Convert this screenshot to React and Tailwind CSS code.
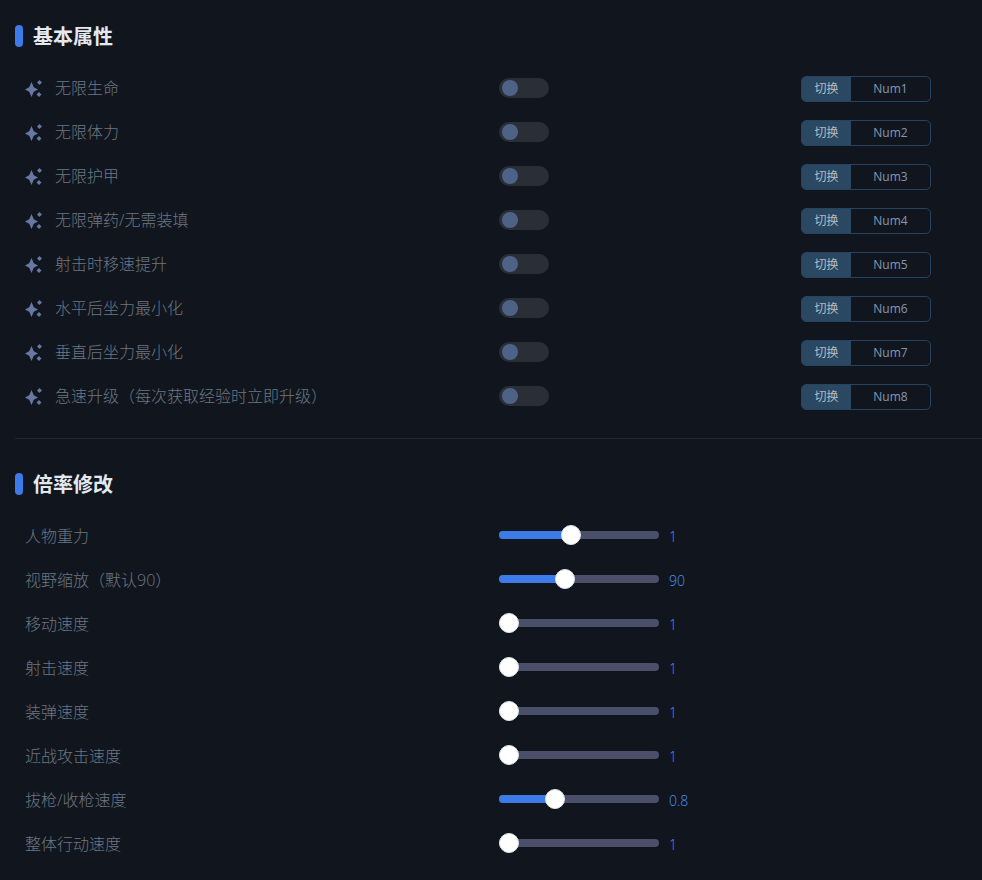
const font = { fontFamily: '"Open Sans", "Noto Sans CJK SC", sans-serif' };

const toggles = [
  ["无限生命", "Num1"],
  ["无限体力", "Num2"],
  ["无限护甲", "Num3"],
  ["无限弹药/无需装填", "Num4"],
  ["射击时移速提升", "Num5"],
  ["水平后坐力最小化", "Num6"],
  ["垂直后坐力最小化", "Num7"],
  ["急速升级（每次获取经验时立即升级）", "Num8"],
];

const sliders = [
  ["人物重力", "1", 72],
  ["视野缩放（默认90）", "90", 66],
  ["移动速度", "1", 10],
  ["射击速度", "1", 10],
  ["装弹速度", "1", 10],
  ["近战攻击速度", "1", 10],
  ["拔枪/收枪速度", "0.8", 56],
  ["整体行动速度", "1", 10],
];

function Spark() {
  return (
    <svg width="18" height="18" viewBox="0 0 18 18" className="shrink-0 mt-[2px]" fill="#6878a4">
      <path d="M6.5 2 L8.8 7.2 L13 9.5 L8.8 11.8 L6.5 17 L4.2 11.8 L0 9.5 L4.2 7.2 Z" />
      <path d="M14.5 0 L15.7 1.3 L17 2.5 L15.7 3.7 L14.5 5 L13.3 3.7 L12 2.5 L13.3 1.3 Z" />
      <path d="M14 12 L15.2 13.3 L16.5 14.5 L15.2 15.7 L14 17 L12.8 15.7 L11.5 14.5 L12.8 13.3 Z" />
    </svg>
  );
}

function Header({ children }) {
  return (
    <div className="flex items-center h-[22px]">
      <div className="w-2 h-[22px] rounded-[4px] bg-[#3c7be8]" />
      <h2 className="ml-[10px] mt-[2px] text-[20px] leading-[22px] font-bold text-[#e4e9f0]">{children}</h2>
    </div>
  );
}

function ToggleRow({ label, hotkey }) {
  return (
    <div className="flex items-center h-11 pl-[10px]">
      <div className="w-[474px] flex items-center gap-3">
        <Spark />
        <span className="text-[16px] leading-[24px] font-light text-[#6b7683]">{label}</span>
      </div>
      <div className="w-[302px]">
        <div className="w-[50px] h-5 rounded-full bg-[#2a2f37] flex items-center pl-[3px]">
          <div className="w-4 h-4 rounded-full bg-[#4e6288]" />
        </div>
      </div>
      <div className="w-[130px] h-[26px] mt-[2px] flex rounded-[5px] border border-[#26435f] overflow-hidden text-[12px]">
        <div className="w-[49px] bg-[#2a4862] text-[#b3bcc6] flex items-center justify-center">切换</div>
        <div className="flex-1 text-[#8497b5] flex items-center justify-center">{hotkey}</div>
      </div>
    </div>
  );
}

function SliderRow({ label, value, pos }) {
  return (
    <div className="flex items-center h-11 pl-[10px]">
      <div className="w-[474px] text-[16px] leading-[24px] font-light text-[#6b7683]">{label}</div>
      <div className="relative w-40 h-2 rounded-full bg-[#4a4f6a] -mt-[2px]">
        <div className="h-2 rounded-full bg-[#3c7be8]" style={{ width: pos }} />
        <div
          className="absolute top-1/2 w-5 h-5 -translate-x-1/2 -translate-y-1/2 rounded-full bg-white border border-[#dfe6ee]"
          style={{ left: pos }}
        />
      </div>
      <span className="ml-[10px] mt-[2px] text-[14px] leading-[20px] font-light text-[#4f8ff7]">{value}</span>
    </div>
  );
}

export default function App() {
  return (
    <div style={font} className="w-[982px] h-[880px] overflow-hidden bg-[#11161e] pt-[25px] pl-[15px]">
      <Header>基本属性</Header>
      <div className="mt-[19px] pb-5 border-b border-[#22282e]">
        {toggles.map(([l, h]) => (
          <ToggleRow key={h} label={l} hotkey={h} />
        ))}
      </div>
      <div className="mt-[34px]">
        <Header>倍率修改</Header>
      </div>
      <div className="mt-[19px]">
        {sliders.map(([l, v, p]) => (
          <SliderRow key={l} label={l} value={v} pos={p} />
        ))}
      </div>
    </div>
  );
}
